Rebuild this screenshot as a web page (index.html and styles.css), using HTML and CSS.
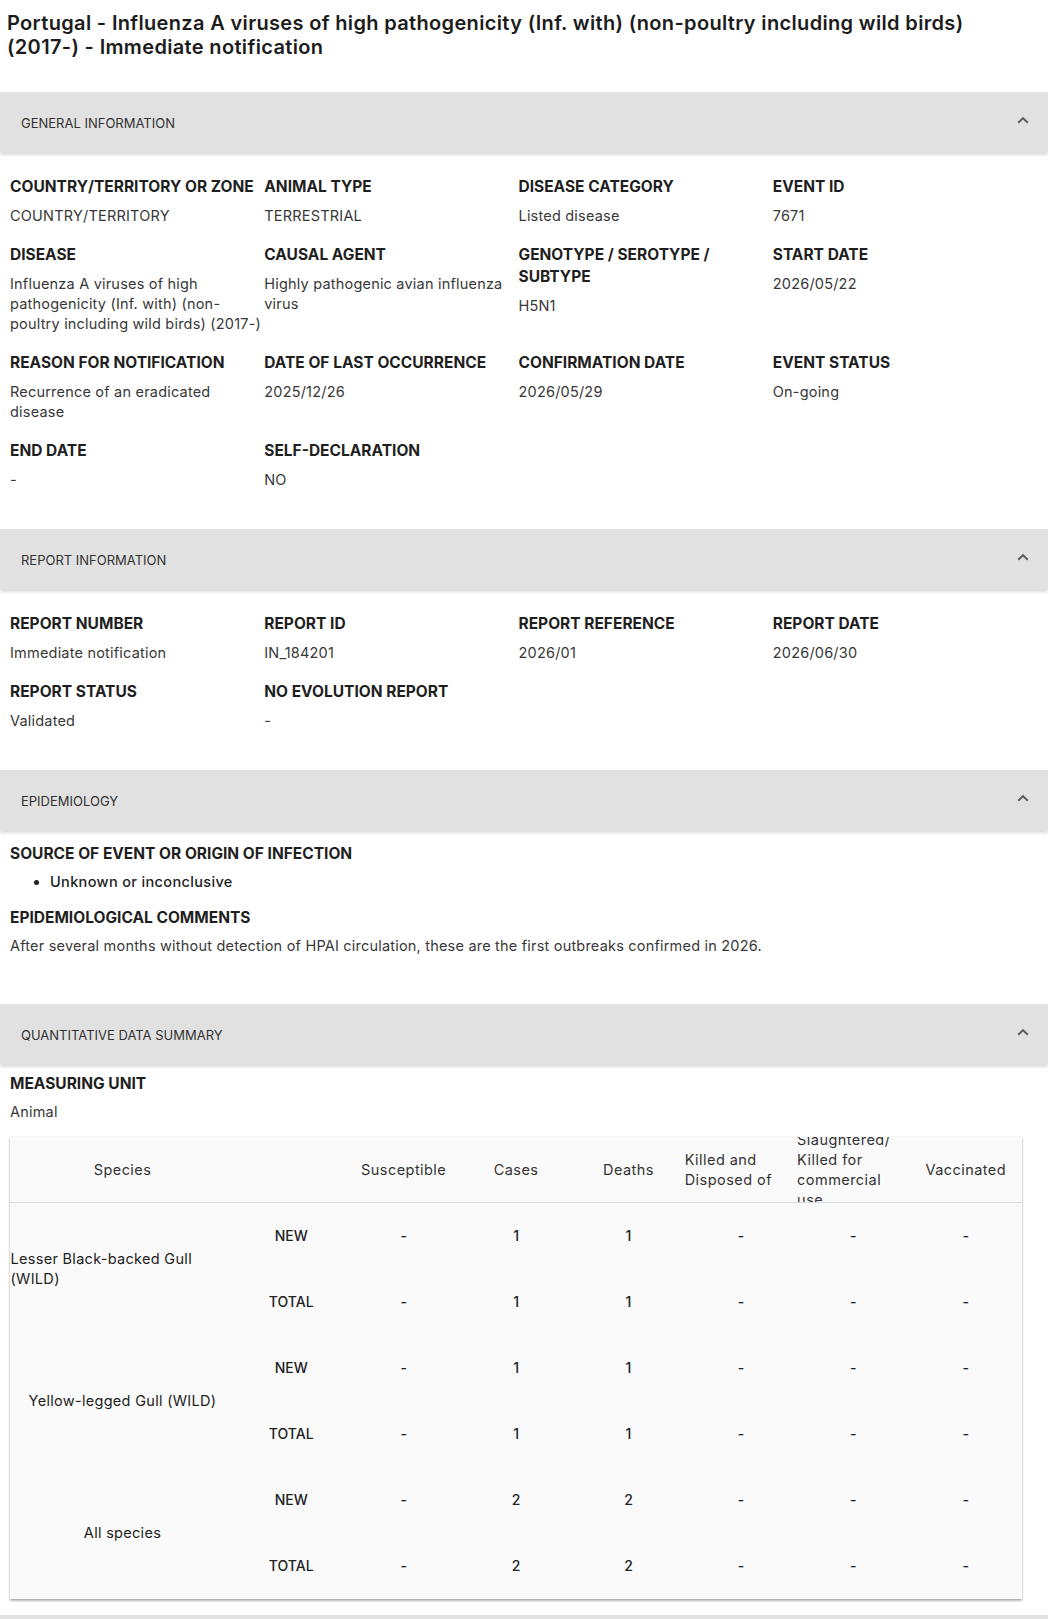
FILE: index.html
```html
<!DOCTYPE html>
<html lang="en">
<head>
<meta charset="utf-8">
<title>Portugal - Immediate notification</title>
<link rel="stylesheet" href="styles.css">
</head>
<body>
<h1 class="title">Portugal - Influenza A viruses of high pathogenicity (Inf. with) (non-poultry including wild birds) (2017-) - Immediate notification</h1>

<div class="panels">
  <section class="panel">
    <header class="panel-header">
      <span class="panel-title">General information</span>
      <svg class="chevron" viewBox="0 0 12 8" width="12" height="8"><polyline points="1.2,6.8 6,2.2 10.8,6.8" fill="none" stroke="#5f5f5f" stroke-width="2"/></svg>
    </header>
    <div class="panel-body">
      <div class="grid">
        <div class="field"><div class="label">Country/Territory or zone</div><div class="value">COUNTRY/TERRITORY</div></div>
        <div class="field"><div class="label">Animal type</div><div class="value">TERRESTRIAL</div></div>
        <div class="field"><div class="label">Disease category</div><div class="value">Listed disease</div></div>
        <div class="field"><div class="label">Event ID</div><div class="value">7671</div></div>

        <div class="field"><div class="label">Disease</div><div class="value">Influenza A viruses of high pathogenicity (Inf. with) (non-poultry including wild birds) (2017-)</div></div>
        <div class="field"><div class="label">Causal agent</div><div class="value">Highly pathogenic avian influenza virus</div></div>
        <div class="field"><div class="label">Genotype / Serotype / Subtype</div><div class="value">H5N1</div></div>
        <div class="field"><div class="label">Start date</div><div class="value">2026/05/22</div></div>

        <div class="field"><div class="label">Reason for notification</div><div class="value">Recurrence of an eradicated disease</div></div>
        <div class="field"><div class="label">Date of last occurrence</div><div class="value">2025/12/26</div></div>
        <div class="field"><div class="label">Confirmation date</div><div class="value">2026/05/29</div></div>
        <div class="field"><div class="label">Event status</div><div class="value">On-going</div></div>

        <div class="field"><div class="label">End date</div><div class="value">-</div></div>
        <div class="field"><div class="label">Self-declaration</div><div class="value">NO</div></div>
      </div>
    </div>
  </section>

  <section class="panel">
    <header class="panel-header">
      <span class="panel-title">Report information</span>
      <svg class="chevron" viewBox="0 0 12 8" width="12" height="8"><polyline points="1.2,6.8 6,2.2 10.8,6.8" fill="none" stroke="#5f5f5f" stroke-width="2"/></svg>
    </header>
    <div class="panel-body">
      <div class="grid">
        <div class="field"><div class="label">Report number</div><div class="value">Immediate notification</div></div>
        <div class="field"><div class="label">Report ID</div><div class="value">IN_184201</div></div>
        <div class="field"><div class="label">Report reference</div><div class="value">2026/01</div></div>
        <div class="field"><div class="label">Report date</div><div class="value">2026/06/30</div></div>

        <div class="field"><div class="label">Report status</div><div class="value">Validated</div></div>
        <div class="field"><div class="label">No evolution report</div><div class="value">-</div></div>
      </div>
    </div>
  </section>

  <section class="panel">
    <header class="panel-header">
      <span class="panel-title">Epidemiology</span>
      <svg class="chevron" viewBox="0 0 12 8" width="12" height="8"><polyline points="1.2,6.8 6,2.2 10.8,6.8" fill="none" stroke="#5f5f5f" stroke-width="2"/></svg>
    </header>
    <div class="panel-body epi-body">
      <div class="label">Source of event or origin of infection</div>
      <ul class="source-list"><li>Unknown or inconclusive</li></ul>
      <div class="label label-spaced">Epidemiological comments</div>
      <div class="value comment">After several months without detection of HPAI circulation, these are the first outbreaks confirmed in 2026.</div>
    </div>
  </section>

  <section class="panel">
    <header class="panel-header">
      <span class="panel-title">Quantitative data summary</span>
      <svg class="chevron" viewBox="0 0 12 8" width="12" height="8"><polyline points="1.2,6.8 6,2.2 10.8,6.8" fill="none" stroke="#5f5f5f" stroke-width="2"/></svg>
    </header>
    <div class="panel-body quant-body">
      <div class="label">Measuring unit</div>
      <div class="value unit">Animal</div>
      <div class="table-card">
        <table class="qtable">
          <colgroup>
            <col class="c-species"><col><col><col><col><col><col><col>
          </colgroup>
          <thead>
            <tr>
              <th><div class="hcell">Species</div></th>
              <th><div class="hcell"></div></th>
              <th><div class="hcell">Susceptible</div></th>
              <th><div class="hcell">Cases</div></th>
              <th><div class="hcell">Deaths</div></th>
              <th><div class="hcell">Killed and Disposed of</div></th>
              <th><div class="hcell">Slaughtered/ Killed for commercial use</div></th>
              <th><div class="hcell">Vaccinated</div></th>
            </tr>
          </thead>
          <tbody>
            <tr>
              <td rowspan="2" class="species"><div class="species-cell"><span class="species-name">Lesser Black-backed Gull (WILD)</span></div></td>
              <td>NEW</td><td>-</td><td>1</td><td>1</td><td>-</td><td>-</td><td>-</td>
            </tr>
            <tr>
              <td>TOTAL</td><td>-</td><td>1</td><td>1</td><td>-</td><td>-</td><td>-</td>
            </tr>
            <tr>
              <td rowspan="2" class="species"><div class="species-cell"><span class="species-name">Yellow-legged Gull (WILD)</span></div></td>
              <td>NEW</td><td>-</td><td>1</td><td>1</td><td>-</td><td>-</td><td>-</td>
            </tr>
            <tr>
              <td>TOTAL</td><td>-</td><td>1</td><td>1</td><td>-</td><td>-</td><td>-</td>
            </tr>
            <tr>
              <td rowspan="2" class="species"><div class="species-cell"><span class="species-name">All species</span></div></td>
              <td>NEW</td><td>-</td><td>2</td><td>2</td><td>-</td><td>-</td><td>-</td>
            </tr>
            <tr>
              <td>TOTAL</td><td>-</td><td>2</td><td>2</td><td>-</td><td>-</td><td>-</td>
            </tr>
          </tbody>
        </table>
      </div>
    </div>
  </section>

  <section class="panel">
    <header class="panel-header panel-header-last"></header>
  </section>
</div>
</body>
</html>
```

FILE: styles.css
```css
* {
  box-sizing: border-box;
}

body {
  margin: 0;
  background: #ffffff;
  color: #212121;
  font-family: Inter, "Noto Sans", "Liberation Sans", sans-serif;
}

.title {
  margin: 0;
  padding: 11px 20px 0 7px;
  font-size: 20px;
  line-height: 24px;
  font-weight: 600;
  letter-spacing: 0.34px;
  color: #1c1c1c;
}

.panels {
  margin-top: 33px;
}

.panel-header {
  position: relative;
  z-index: 1;
  height: 61px;
  display: flex;
  align-items: center;
  justify-content: space-between;
  padding: 0 19px 0 21px;
  background: #e1e1e1;
  box-shadow: 0 2px 3px rgba(0, 0, 0, 0.14);
}

.panel-title {
  font-size: 13px;
  text-transform: uppercase;
  color: #333333;
}

.chevron {
  display: block;
  margin-top: -6px;
}

.panel-body {
  padding: 23px 21px 39px 10px;
}

.grid {
  display: grid;
  grid-template-columns: repeat(4, 1fr);
  row-gap: 18px;
}

.label {
  font-size: 15.5px;
  line-height: 22px;
  font-weight: 700;
  text-transform: uppercase;
  color: #1f1f1f;
}

.value {
  margin-top: 8px;
  font-size: 14.5px;
  line-height: 20px;
  letter-spacing: 0.2px;
  color: #383838;
}

.epi-body {
  padding-top: 12px;
  padding-bottom: 48px;
}

.source-list {
  margin: 7px 0 0;
  padding-left: 40px;
  font-size: 14.5px;
  line-height: 20px;
  letter-spacing: 0.35px;
  font-weight: 500;
  color: #222222;
}

.label-spaced {
  margin-top: 15px;
}

.comment {
  margin-top: 7px;
}

.quant-body {
  padding: 8px 26px 16px 10px;
}

.unit {
  margin-top: 7px;
}

.table-card {
  margin-top: 15px;
  background: #fafafa;
  box-shadow: 0 2px 2px rgba(0, 0, 0, 0.28), 0 0 2px rgba(0, 0, 0, 0.12);
}

.qtable {
  width: 100%;
  table-layout: fixed;
  border-collapse: collapse;
  font-size: 14px;
  color: #222222;
}

.c-species {
  width: 225px;
}

.qtable th {
  padding: 0;
  font-size: 14.5px;
  letter-spacing: 0.45px;
  font-weight: 400;
  color: #333333;
  border-bottom: 1px solid #dcdcdc;
}

.hcell {
  height: 65px;
  display: flex;
  align-items: center;
  justify-content: center;
  overflow: hidden;
  text-align: left;
  line-height: 20px;
}

.qtable td {
  height: 66px;
  padding: 0;
  text-align: center;
  vertical-align: middle;
  font-weight: 500;
}

.qtable td.species {
  font-size: 14.5px;
  letter-spacing: 0.3px;
  font-weight: 400;
}

.species-cell {
  display: flex;
  align-items: center;
  justify-content: center;
  text-align: left;
  line-height: 20px;
}

.species-name {
  max-width: 224px;
}
```
